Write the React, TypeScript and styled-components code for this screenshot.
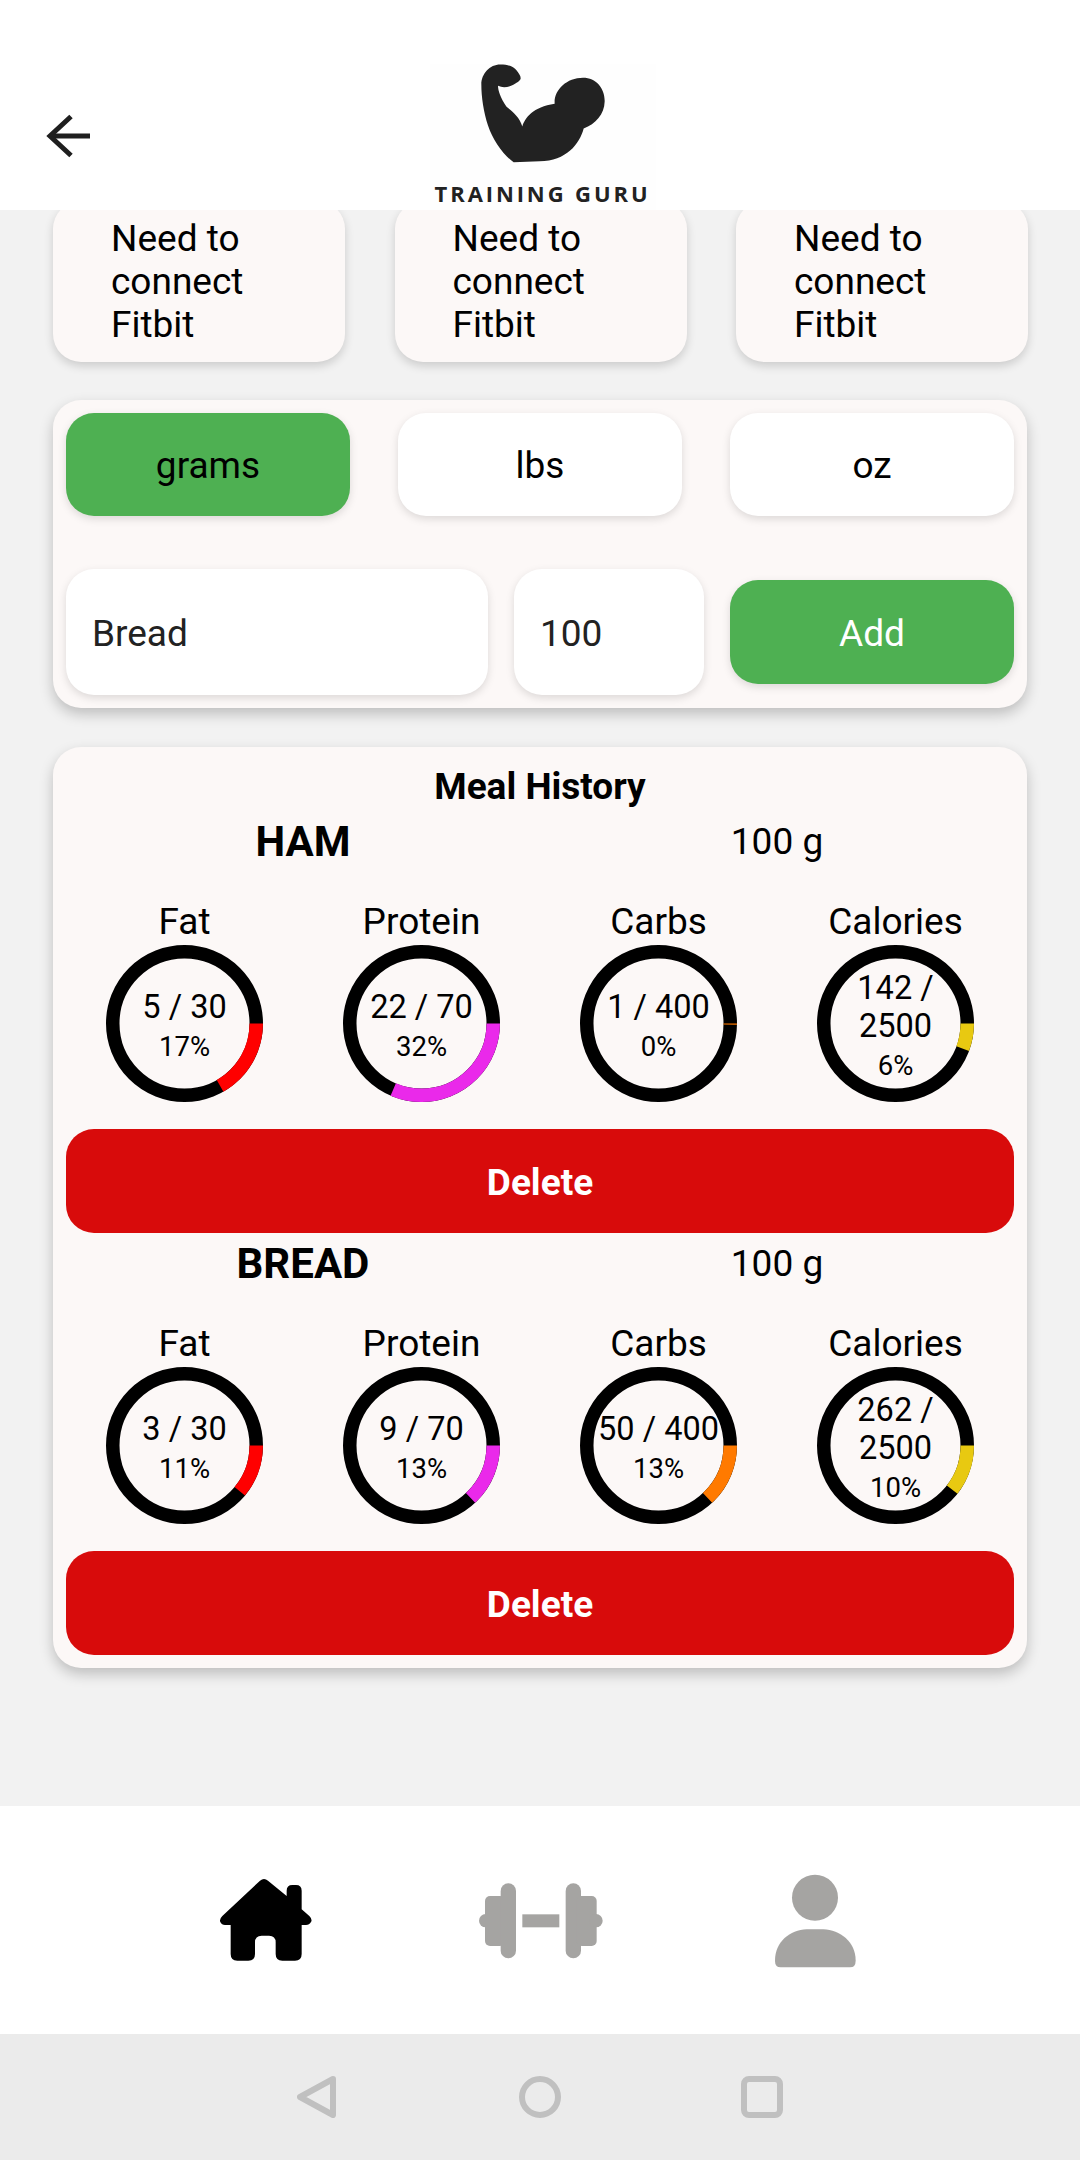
import React from 'react';
import styled, { createGlobalStyle } from 'styled-components';

const GlobalStyle = createGlobalStyle`
html, body {
    margin: 0;
    padding: 0;
}
body {
    font-family: Roboto, "Liberation Sans", sans-serif;
    color: #000;
}
* {
    box-sizing: border-box;
}
`

const Root = styled.div`
width: 1080px;
height: 2160px;
display: flex;
flex-direction: column;
background-color: #f2f2f2;
overflow: hidden;
`

const Header = styled.header`
position: relative;
z-index: 2;
height: 210px;
flex-shrink: 0;
background-color: #fff;
display: grid;
grid-template-columns: 1fr auto 1fr;
align-items: end;
`

const BackButton = styled.button`
border: none;
background: none;
padding: 0;
margin: 0 0 52px 46px;
width: 44px;
height: 44px;
justify-self: start;
color: #1f1f1f;
`

const Logo = styled.div`
width: 226px;
height: 146px;
margin-left: 5px;
display: flex;
flex-direction: column;
align-items: center;
background-color: #fefefe;
`

const LogoText = styled.div`
font-family: "Open Sans", sans-serif;
font-size: 22px;
font-weight: 700;
line-height: 26px;
letter-spacing: 2.9px;
white-space: nowrap;
color: #222;
margin-top: 17px;
`

const Main = styled.main`
flex: 1;
min-height: 0;
overflow: hidden;
padding: 0 53px;
`

const ConnectRow = styled.div`
display: flex;
justify-content: space-between;
margin: -9px -1px 0 0;
`

const ConnectCard = styled.div`
width: 292px;
padding: 16px 58px;
font-size: 37px;
line-height: 43px;
background-color: #fcf8f7;
border-radius: 28px;
box-shadow: 0 4px 10px rgba(0, 0, 0, 0.16);
`

const Panel = styled.section`
background-color: #fcf8f7;
border-radius: 28px;
box-shadow: 0 6px 14px rgba(0, 0, 0, 0.22);
padding: 13px;
`

const AddPanel = styled(Panel)`
margin-top: 38px;
display: flex;
flex-direction: column;
gap: 53px;
`

const UnitRow = styled.div`
display: flex;
justify-content: space-between;
`

const UnitButton = styled.button<{ $active?: boolean }>`
width: 284px;
height: 103px;
border: none;
border-radius: 28px;
padding: 2px 0 0;
font-family: inherit;
font-size: 37px;
color: #000;
background-color: ${(p) => (p.$active ? '#4eb052' : '#fff')};
box-shadow: 0 3px 8px rgba(0, 0, 0, 0.13);
`

const EntryRow = styled.div`
display: flex;
align-items: center;
gap: 26px;
`

const EntryInput = styled.input<{ $width: number }>`
width: ${(p) => p.$width}px;
height: 126px;
border: none;
outline: none;
border-radius: 28px;
padding: 2px 26px 0;
font-family: inherit;
font-size: 37px;
color: #222;
background-color: #fff;
box-shadow: 0 3px 8px rgba(0, 0, 0, 0.13);
`

const AddButton = styled.button`
width: 284px;
height: 104px;
border: none;
border-radius: 28px;
padding: 2px 0 0;
font-family: inherit;
font-size: 37px;
color: #fff;
background-color: #4eb052;
box-shadow: 0 3px 8px rgba(0, 0, 0, 0.13);
`

const HistoryPanel = styled(Panel)`
margin-top: 39px;
`

const HistoryTitle = styled.h2`
margin: 0;
height: 54px;
font-size: 37px;
line-height: 54px;
font-weight: 700;
text-align: center;
`

const MealItem = styled.div`
margin-bottom: 3px;

&:last-child {
    margin-bottom: 0;
}
`

const MealHeader = styled.div`
height: 54px;
display: grid;
grid-template-columns: 1fr 1fr;
align-items: center;
text-align: center;
`

const MealName = styled.div`
font-size: 42px;
font-weight: 700;
`

const MealAmount = styled.div`
font-size: 37px;
`

const StatGrid = styled.div`
display: grid;
grid-template-columns: repeat(4, 1fr);
margin-top: 32px;
`

const Stat = styled.div`
display: flex;
flex-direction: column;
align-items: center;
`

const StatLabel = styled.div`
font-size: 37px;
line-height: 44px;
margin-bottom: 1px;
`

const Ring = styled.div`
width: 157px;
height: 157px;
display: grid;

& > * {
    grid-area: 1 / 1;
}
`

const RingText = styled.div`
place-self: center;
width: 130px;
text-align: center;
`

const RingValue = styled.div`
font-size: 32.5px;
line-height: 38px;
`

const RingPercent = styled.div`
font-size: 27.5px;
line-height: 34px;
margin: 4px 0 -4px;
`

const DeleteButton = styled.button`
display: block;
width: 100%;
height: 104px;
margin-top: 27px;
border: none;
border-radius: 28px;
padding: 2px 0 0;
font-family: inherit;
font-size: 37px;
font-weight: 700;
color: #fff;
background-color: #d80b0b;
`

const BottomNav = styled.nav`
height: 228px;
flex-shrink: 0;
background-color: #fff;
padding: 0 128px;
display: grid;
grid-template-columns: repeat(3, 1fr);
align-items: center;
justify-items: center;
`

const SystemBar = styled.div`
height: 126px;
flex-shrink: 0;
background-color: #ebebeb;
display: flex;
align-items: center;
justify-content: center;
gap: 180px;
`

type Macro = {
    label: string
    value: string
    percent: string
    fill: number
    color: string
}

type Meal = {
    name: string
    amount: string
    macros: Macro[]
}

const meals: Meal[] = [
    {
        name: 'HAM',
        amount: '100 g',
        macros: [
            { label: 'Fat', value: '5 / 30', percent: '17%', fill: 16.7, color: '#ff0000' },
            { label: 'Protein', value: '22 / 70', percent: '32%', fill: 31.4, color: '#ea29ea' },
            { label: 'Carbs', value: '1 / 400', percent: '0%', fill: 0.25, color: '#ff7a00' },
            { label: 'Calories', value: '142 / 2500', percent: '6%', fill: 5.7, color: '#e8c911' },
        ],
    },
    {
        name: 'BREAD',
        amount: '100 g',
        macros: [
            { label: 'Fat', value: '3 / 30', percent: '11%', fill: 11, color: '#ff0000' },
            { label: 'Protein', value: '9 / 70', percent: '13%', fill: 13, color: '#ea29ea' },
            { label: 'Carbs', value: '50 / 400', percent: '13%', fill: 13, color: '#ff7a00' },
            { label: 'Calories', value: '262 / 2500', percent: '10%', fill: 10.5, color: '#e8c911' },
        ],
    },
]

const RingArc: React.FC<{ fill: number; color: string }> = ({ fill, color }) => {
    const r = 71.75
    const c = 2 * Math.PI * r
    return (
        <svg width="157" height="157" viewBox="0 0 157 157">
            <circle cx="78.5" cy="78.5" r={r} fill="none" stroke="#000" strokeWidth="13.5" />
            <circle
                cx="78.5"
                cy="78.5"
                r={r}
                fill="none"
                stroke={color}
                strokeWidth="13.5"
                strokeDasharray={`${(c * fill) / 100} ${c}`}
            />
        </svg>
    )
}

const BackArrow = () => (
    <svg width="44" height="44" viewBox="0 0 44 44" fill="none" stroke="currentColor" strokeWidth="5">
        <path d="M44 22H5" />
        <path d="M25 2.500 4 22l21 19.500" />
    </svg>
)

const Muscle = () => (
    <svg width="124" height="99" viewBox="304 71 372 296">
        <path
            fill="#222"
            d="M362 72C384 72 402 78 411 90C417 98 423 106 423 113C423 120 410 128 396 135C382 141 368 142 355 136C355 150 362 172 380 198C394 210 420 228 428 258C436 232 460 200 525 190C522 150 560 112 610 112C650 112 676 145 675 183C674 222 648 250 612 264C600 310 560 362 480 362L402 365C372 345 340 300 325 255C312 215 305 170 305 132C305 100 330 72 362 72Z"
        />
    </svg>
)

const HomeIcon = () => (
    <svg width="110" height="100" viewBox="0 0 330 300" fill="#000">
        <path d="M150 32Q162 22 174 32L230 78V62Q230 45 247 45H258Q275 45 275 62V118L298 138Q308 148 303 156Q298 165 288 165H275V252Q275 272 255 272H217Q197 272 197 252V217Q197 197 177 197H155Q135 197 135 217V252Q135 272 115 272H82Q62 272 62 252V165H45Q35 165 31 156Q27 148 37 138Z" />
    </svg>
)

const DumbbellIcon = () => (
    <svg width="140" height="100" viewBox="0 0 420 300" fill="#a5a4a2">
        <circle cx="47" cy="152" r="20" />
        <rect x="45" y="78" width="60" height="150" rx="15" />
        <rect x="92" y="40" width="46" height="225" rx="23" />
        <rect x="157" y="133" width="111" height="39" />
        <rect x="287" y="40" width="46" height="225" rx="23" />
        <rect x="320" y="78" width="60" height="150" rx="15" />
        <circle cx="378" cy="152" r="20" />
    </svg>
)

const PersonIcon = () => (
    <svg width="100" height="100" viewBox="0 0 300 300" fill="#a5a4a2">
        <circle cx="150" cy="83" r="69" />
        <path d="M30 272C30 215 75 180 125 178H175C225 180 272 215 272 272Q272 292 255 292H47Q30 292 30 272Z" />
    </svg>
)

const SystemBack = () => (
    <svg width="42" height="42" viewBox="0 0 42 42" fill="none" stroke="#c0c0c0" strokeWidth="6" strokeLinejoin="round">
        <path d="M36 3 3 21l33 18Z" />
    </svg>
)

const SystemHome = () => (
    <svg width="42" height="42" viewBox="0 0 42 42" fill="none" stroke="#c0c0c0" strokeWidth="6">
        <circle cx="21" cy="21" r="18" />
    </svg>
)

const SystemRecent = () => (
    <svg width="42" height="42" viewBox="0 0 42 42" fill="none" stroke="#c0c0c0" strokeWidth="6">
        <rect x="3" y="3" width="36" height="36" rx="5" />
    </svg>
)

export default function App() {
    return (
        <Root>
            <GlobalStyle />
            <Header>
                <BackButton aria-label="Back">
                    <BackArrow />
                </BackButton>
                <Logo>
                    <Muscle />
                    <LogoText>TRAINING GURU</LogoText>
                </Logo>
            </Header>
            <Main>
                <ConnectRow>
                    <ConnectCard>Need to connect Fitbit</ConnectCard>
                    <ConnectCard>Need to connect Fitbit</ConnectCard>
                    <ConnectCard>Need to connect Fitbit</ConnectCard>
                </ConnectRow>
                <AddPanel>
                    <UnitRow>
                        <UnitButton $active>grams</UnitButton>
                        <UnitButton>lbs</UnitButton>
                        <UnitButton>oz</UnitButton>
                    </UnitRow>
                    <EntryRow>
                        <EntryInput $width={422} defaultValue="Bread" />
                        <EntryInput $width={190} defaultValue="100" />
                        <AddButton>Add</AddButton>
                    </EntryRow>
                </AddPanel>
                <HistoryPanel>
                    <HistoryTitle>Meal History</HistoryTitle>
                    {meals.map((meal) => (
                        <MealItem key={meal.name}>
                            <MealHeader>
                                <MealName>{meal.name}</MealName>
                                <MealAmount>{meal.amount}</MealAmount>
                            </MealHeader>
                            <StatGrid>
                                {meal.macros.map((m) => (
                                    <Stat key={m.label}>
                                        <StatLabel>{m.label}</StatLabel>
                                        <Ring>
                                            <RingArc fill={m.fill} color={m.color} />
                                            <RingText>
                                                <RingValue>{m.value}</RingValue>
                                                <RingPercent>{m.percent}</RingPercent>
                                            </RingText>
                                        </Ring>
                                    </Stat>
                                ))}
                            </StatGrid>
                            <DeleteButton>Delete</DeleteButton>
                        </MealItem>
                    ))}
                </HistoryPanel>
            </Main>
            <BottomNav>
                <HomeIcon />
                <DumbbellIcon />
                <PersonIcon />
            </BottomNav>
            <SystemBar>
                <SystemBack />
                <SystemHome />
                <SystemRecent />
            </SystemBar>
        </Root>
    )
}
